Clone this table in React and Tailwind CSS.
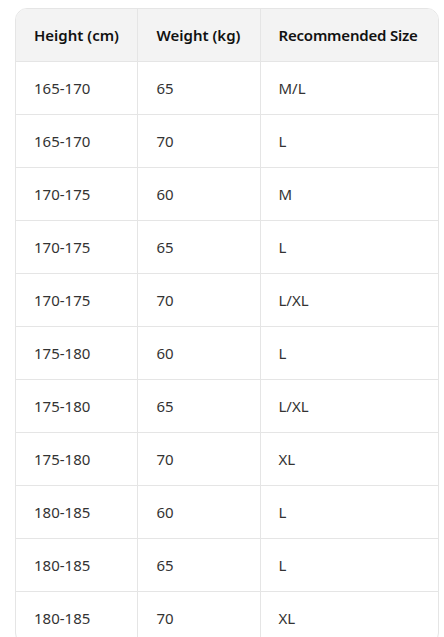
const rows = [
  ['165-170', '65', 'M/L'],
  ['165-170', '70', 'L'],
  ['170-175', '60', 'M'],
  ['170-175', '65', 'L'],
  ['170-175', '70', 'L/XL'],
  ['175-180', '60', 'L'],
  ['175-180', '65', 'L/XL'],
  ['175-180', '70', 'XL'],
  ['180-185', '60', 'L'],
  ['180-185', '65', 'L'],
  ['180-185', '70', 'XL'],
];

export default function App() {
  return (
    <div className="min-h-screen bg-white pt-2 pl-[15px] pr-[5px]" style={{ fontFamily: '"Noto Sans", "Open Sans", sans-serif' }}>
      <div className="rounded-xl border border-[#e5e5e5] overflow-hidden">
        <table className="w-full border-collapse text-[15px] table-fixed">
          <colgroup>
            <col className="w-[121px]" />
            <col className="w-[123px]" />
            <col />
          </colgroup>
          <thead>
            <tr className="bg-[#f3f3f3] h-[52px] text-left">
              <th className="px-[18px] font-semibold text-[#111] border-r border-[#e5e5e5] whitespace-nowrap">Height (cm)</th>
              <th className="px-[19px] font-semibold text-[#111] border-r border-[#e5e5e5] whitespace-nowrap">Weight (kg)</th>
              <th className="pl-[18px] pr-0 font-semibold text-[#111] whitespace-nowrap tracking-[-0.2px]">Recommended Size</th>
            </tr>
          </thead>
          <tbody>
            {rows.map((r, i) => (
              <tr key={i} className="h-[53px] border-t border-[#e5e5e5] text-[#333]">
                <td className="px-[18px] pt-px border-r border-[#e5e5e5]">{r[0]}</td>
                <td className="px-[19px] pt-px border-r border-[#e5e5e5]">{r[1]}</td>
                <td className="px-[18px] pt-px">{r[2]}</td>
              </tr>
            ))}
          </tbody>
        </table>
      </div>
    </div>
  );
}
